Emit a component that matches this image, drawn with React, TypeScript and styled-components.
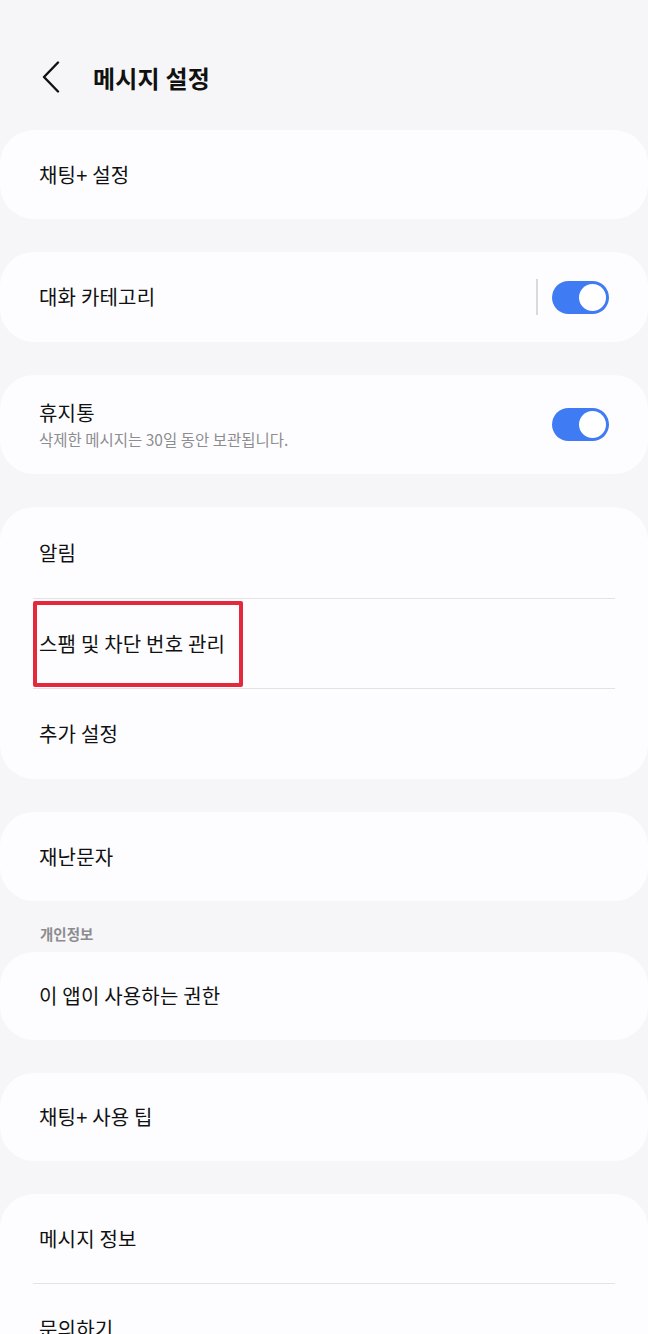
import styled, { createGlobalStyle } from "styled-components";

const GlobalStyle = createGlobalStyle`
  html, body {
    margin: 0;
    padding: 0;
    background: #f6f6f8;
  }
  body {
    font-family: "Noto Sans CJK KR", "Noto Sans", sans-serif;
    color: #111111;
    -webkit-font-smoothing: antialiased;
  }
`;

const Page = styled.div`
  width: 648px;
  height: 1334px;
  overflow: hidden;
`;

const Header = styled.header`
  display: flex;
  align-items: center;
  height: 58px;
  margin-top: 48px;
  margin-bottom: 24px;
  padding-left: 41px;
  gap: 32px;
`;

const BackButton = styled.button`
  display: flex;
  align-items: center;
  justify-content: center;
  width: 20px;
  height: 34px;
  padding: 0;
  border: none;
  background: none;
`;

const Title = styled.h1`
  margin: 0;
  font-size: 24px;
  font-weight: 700;
  letter-spacing: 0.2px;
`;

const List = styled.div`
  display: flex;
  flex-direction: column;
  gap: 33px;
`;

const Group = styled.div`
  display: flex;
  flex-direction: column;
`;

const Card = styled.section`
  background: #fdfdff;
  border-radius: 34px;
  display: flex;
  flex-direction: column;
  flex-shrink: 0;
`;

const Row = styled.div<{ $h?: number }>`
  position: relative;
  display: flex;
  align-items: center;
  flex-shrink: 0;
  height: ${({ $h }) => $h ?? 89}px;
  padding: 0 39px;
  box-sizing: border-box;
`;

const Divider = styled.div`
  height: 1px;
  flex-shrink: 0;
  margin: 0 33px;
  background: #e3e3e6;
`;

const Texts = styled.div`
  flex: 1;
  display: flex;
  flex-direction: column;
  gap: 3px;
`;

const Label = styled.span`
  font-size: 20px;
  line-height: 26px;
  letter-spacing: 0.2px;
  white-space: nowrap;
`;

const Sub = styled.span`
  font-size: 15.5px;
  line-height: 20px;
  color: #8d8d90;
  white-space: nowrap;
`;

const SectionLabel = styled.div`
  height: 51px;
  flex-shrink: 0;
  box-sizing: border-box;
  padding: 24px 0 0 40px;
  font-size: 14.5px;
  line-height: 18px;
  font-weight: 700;
  color: #8c8c90;
`;

const VSep = styled.div`
  width: 2px;
  height: 36px;
  background: #dadadd;
  margin-right: 14px;
`;

const Toggle = styled.div<{ $on: boolean }>`
  position: relative;
  width: 57px;
  height: 33px;
  border-radius: 17px;
  background: ${({ $on }) => ($on ? "#3f7cf4" : "#b8b8bc")};
  flex-shrink: 0;
`;

const Knob = styled.div<{ $on: boolean }>`
  position: absolute;
  top: 3px;
  ${({ $on }) => ($on ? "right: 3px;" : "left: 3px;")}
  width: 27px;
  height: 27px;
  border-radius: 50%;
  background: #ffffff;
`;

const Highlight = styled.div`
  position: absolute;
  left: 33px;
  top: 2px;
  width: 210px;
  bottom: 1px;
  border: 4px solid #e3293b;
  border-radius: 2px;
  box-sizing: border-box;
  pointer-events: none;
`;

const Switch = ({ on }: { on: boolean }) => (
  <Toggle $on={on}>
    <Knob $on={on} />
  </Toggle>
);

export default function App() {
  return (
    <Page>
      <GlobalStyle />
      <Header>
        <BackButton aria-label="뒤로">
          <svg width="18" height="32" viewBox="0 0 18 32" fill="none">
            <polyline
              points="16,1.5 2,16 16,30.5"
              stroke="#111"
              strokeWidth="2.4"
              strokeLinecap="round"
              strokeLinejoin="round"
            />
          </svg>
        </BackButton>
        <Title>메시지 설정</Title>
      </Header>

      <List>
        <Card>
          <Row>
            <Label>채팅+ 설정</Label>
          </Row>
        </Card>

        <Card>
          <Row $h={90}>
            <Texts>
              <Label>대화 카테고리</Label>
            </Texts>
            <VSep />
            <Switch on />
          </Row>
        </Card>

        <Card>
          <Row $h={99}>
            <Texts>
              <Label>휴지통</Label>
              <Sub>삭제한 메시지는 30일 동안 보관됩니다.</Sub>
            </Texts>
            <Switch on />
          </Row>
        </Card>

        <Card>
          <Row $h={91}>
            <Label>알림</Label>
          </Row>
          <Divider />
          <Row>
            <Label>스팸 및 차단 번호 관리</Label>
            <Highlight />
          </Row>
          <Divider />
          <Row $h={90}>
            <Label>추가 설정</Label>
          </Row>
        </Card>

        <Group>
          <Card>
            <Row>
              <Label>재난문자</Label>
            </Row>
          </Card>
          <SectionLabel>개인정보</SectionLabel>
          <Card>
            <Row $h={88}>
              <Label>이 앱이 사용하는 권한</Label>
            </Row>
          </Card>
        </Group>

        <Card>
          <Row $h={88}>
            <Label>채팅+ 사용 팁</Label>
          </Row>
        </Card>

        <Card>
          <Row>
            <Label>메시지 정보</Label>
          </Row>
          <Divider />
          <Row>
            <Label>문의하기</Label>
          </Row>
        </Card>
      </List>
    </Page>
  );
}
